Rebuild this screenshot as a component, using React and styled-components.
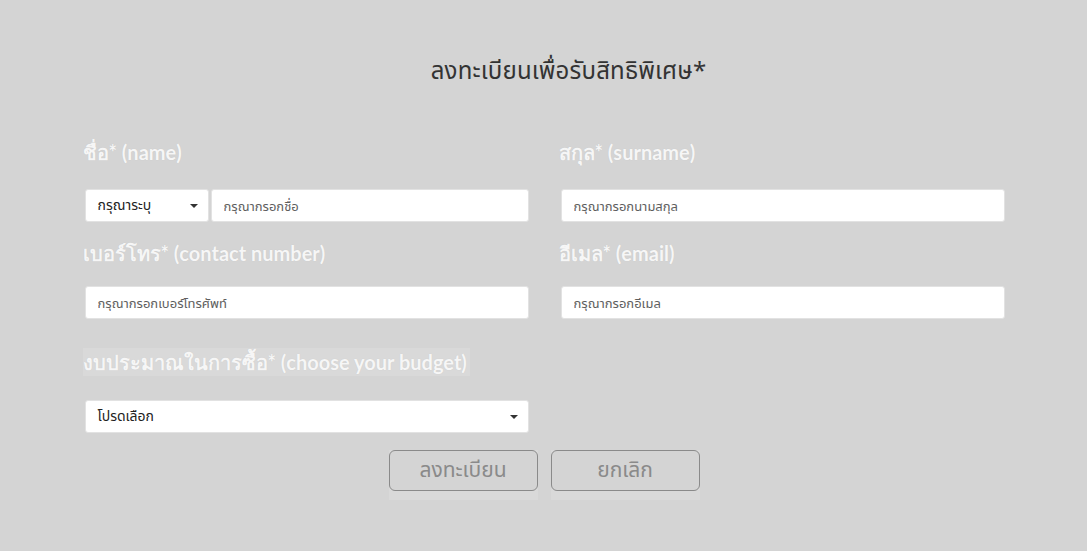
import React from "react";
import styled, { createGlobalStyle } from "styled-components";

const Global = createGlobalStyle`
  html, body { margin: 0; padding: 0; background: #d4d4d4; }
  body { font-family: "Noto Sans", "Noto Sans Thai", "Tahoma", sans-serif; }
  * { box-sizing: border-box; }
`;

const Page = styled.div`
  min-height: 551px;
  background: #d4d4d4;
  padding-top: 50px;
`;

const Title = styled.h1`
  margin: 0;
  text-align: center;
  font-size: 24px;
  font-weight: 400;
  color: #333;
  line-height: 40px;
  padding-left: 50px;
  letter-spacing: 0.2px;
`;

const Form = styled.form`
  width: 922px;
  margin: 48px auto 0;
  display: grid;
  grid-template-columns: 446px 446px;
  column-gap: 30px;
`;

const Field = styled.div`
  display: flex;
  flex-direction: column;
  padding-left: 2px;
`;

const Label = styled.label`
  align-self: flex-start;
  margin-left: -2px;
  font-family: Lato, "Noto Sans", sans-serif;
  font-size: 20px;
  font-weight: 700;
  color: #f6f6f6;
  line-height: 28px;
  height: 28px;
  text-shadow: 0 0 1px rgba(0,0,0,0.1);
  background: ${(p) => (p.$hl ? "#d9d9d9" : "transparent")};
  padding-right: ${(p) => (p.$hl ? "3px" : "0")};
  margin-bottom: ${(p) => p.$mb || 23}px;
`;

const Row = styled.div`
  display: flex;
  gap: 2px;
`;

const Input = styled.input`
  flex: 1;
  min-width: 0;
  height: 33px;
  border: 1px solid #e2e2e2;
  border-radius: 3px;
  background: #fff;
  padding: 0 12px;
  font-family: inherit;
  font-size: 13px;
  color: #333;
  outline: none;
  &::placeholder { color: #5e5e5e; }
`;

const Select = styled.div`
  position: relative;
  height: 33px;
  width: ${(p) => p.$w || "100%"};
  flex: ${(p) => (p.$w ? "none" : "1")};
  background: #fff;
  border: 1px solid #e2e2e2;
  border-radius: 3px;
  display: flex;
  align-items: center;
  justify-content: space-between;
  padding: 0 12px;
  font-size: 14px;
  color: #222;
`;

const Caret = styled.span`
  width: 0;
  height: 0;
  border-left: 4px solid transparent;
  border-right: 4px solid transparent;
  border-top: 4px solid #333;
  margin-right: -2px;
`;

const Spacer = styled.div`
  height: ${(p) => p.$h}px;
`;

const Buttons = styled.div`
  display: flex;
  justify-content: center;
  gap: 13px;
  margin-top: 17px;
  padding-left: 1px;
`;

const BtnWrap = styled.div`
  background: #d9d9d9;
  padding-bottom: 9px;
`;

const Button = styled.button`
  width: 149px;
  height: 41px;
  background: #d4d4d4;
  border: 1px solid #8a8a8a;
  border-radius: 6px;
  color: #8a8a8a;
  font-family: inherit;
  font-size: 21px;
  cursor: pointer;
  display: block;
`;

export default function App() {
  return (
    <Page>
      <Global />
      <Title>ลงทะเบียนเพื่อรับสิทธิพิเศษ*</Title>
      <Form onSubmit={(e) => e.preventDefault()}>
        <Field>
          <Label>ชื่อ* (name)</Label>
          <Row>
            <Select $w="124px">
              <span>กรุณาระบุ</span>
              <Caret />
            </Select>
            <Input placeholder="กรุณากรอกชื่อ" />
          </Row>
        </Field>
        <Field>
          <Label>สกุล* (surname)</Label>
          <Row>
            <Input placeholder="กรุณากรอกนามสกุล" />
          </Row>
        </Field>
        <Field>
          <Spacer $h={17} />
          <Label $mb={19}>เบอร์โทร* (contact number)</Label>
          <Row>
            <Input placeholder="กรุณากรอกเบอร์โทรศัพท์" />
          </Row>
        </Field>
        <Field>
          <Spacer $h={17} />
          <Label $mb={19}>อีเมล* (email)</Label>
          <Row>
            <Input placeholder="กรุณากรอกอีเมล" />
          </Row>
        </Field>
        <Field>
          <Spacer $h={29} />
          <Label $hl $mb={24}>งบประมาณในการซื้อ* (choose your budget)</Label>
          <Row>
            <Select>
              <span>โปรดเลือก</span>
              <Caret />
            </Select>
          </Row>
        </Field>
        <div />
      </Form>
      <Buttons>
        <BtnWrap><Button type="button">ลงทะเบียน</Button></BtnWrap>
        <BtnWrap><Button type="button">ยกเลิก</Button></BtnWrap>
      </Buttons>
    </Page>
  );
}
